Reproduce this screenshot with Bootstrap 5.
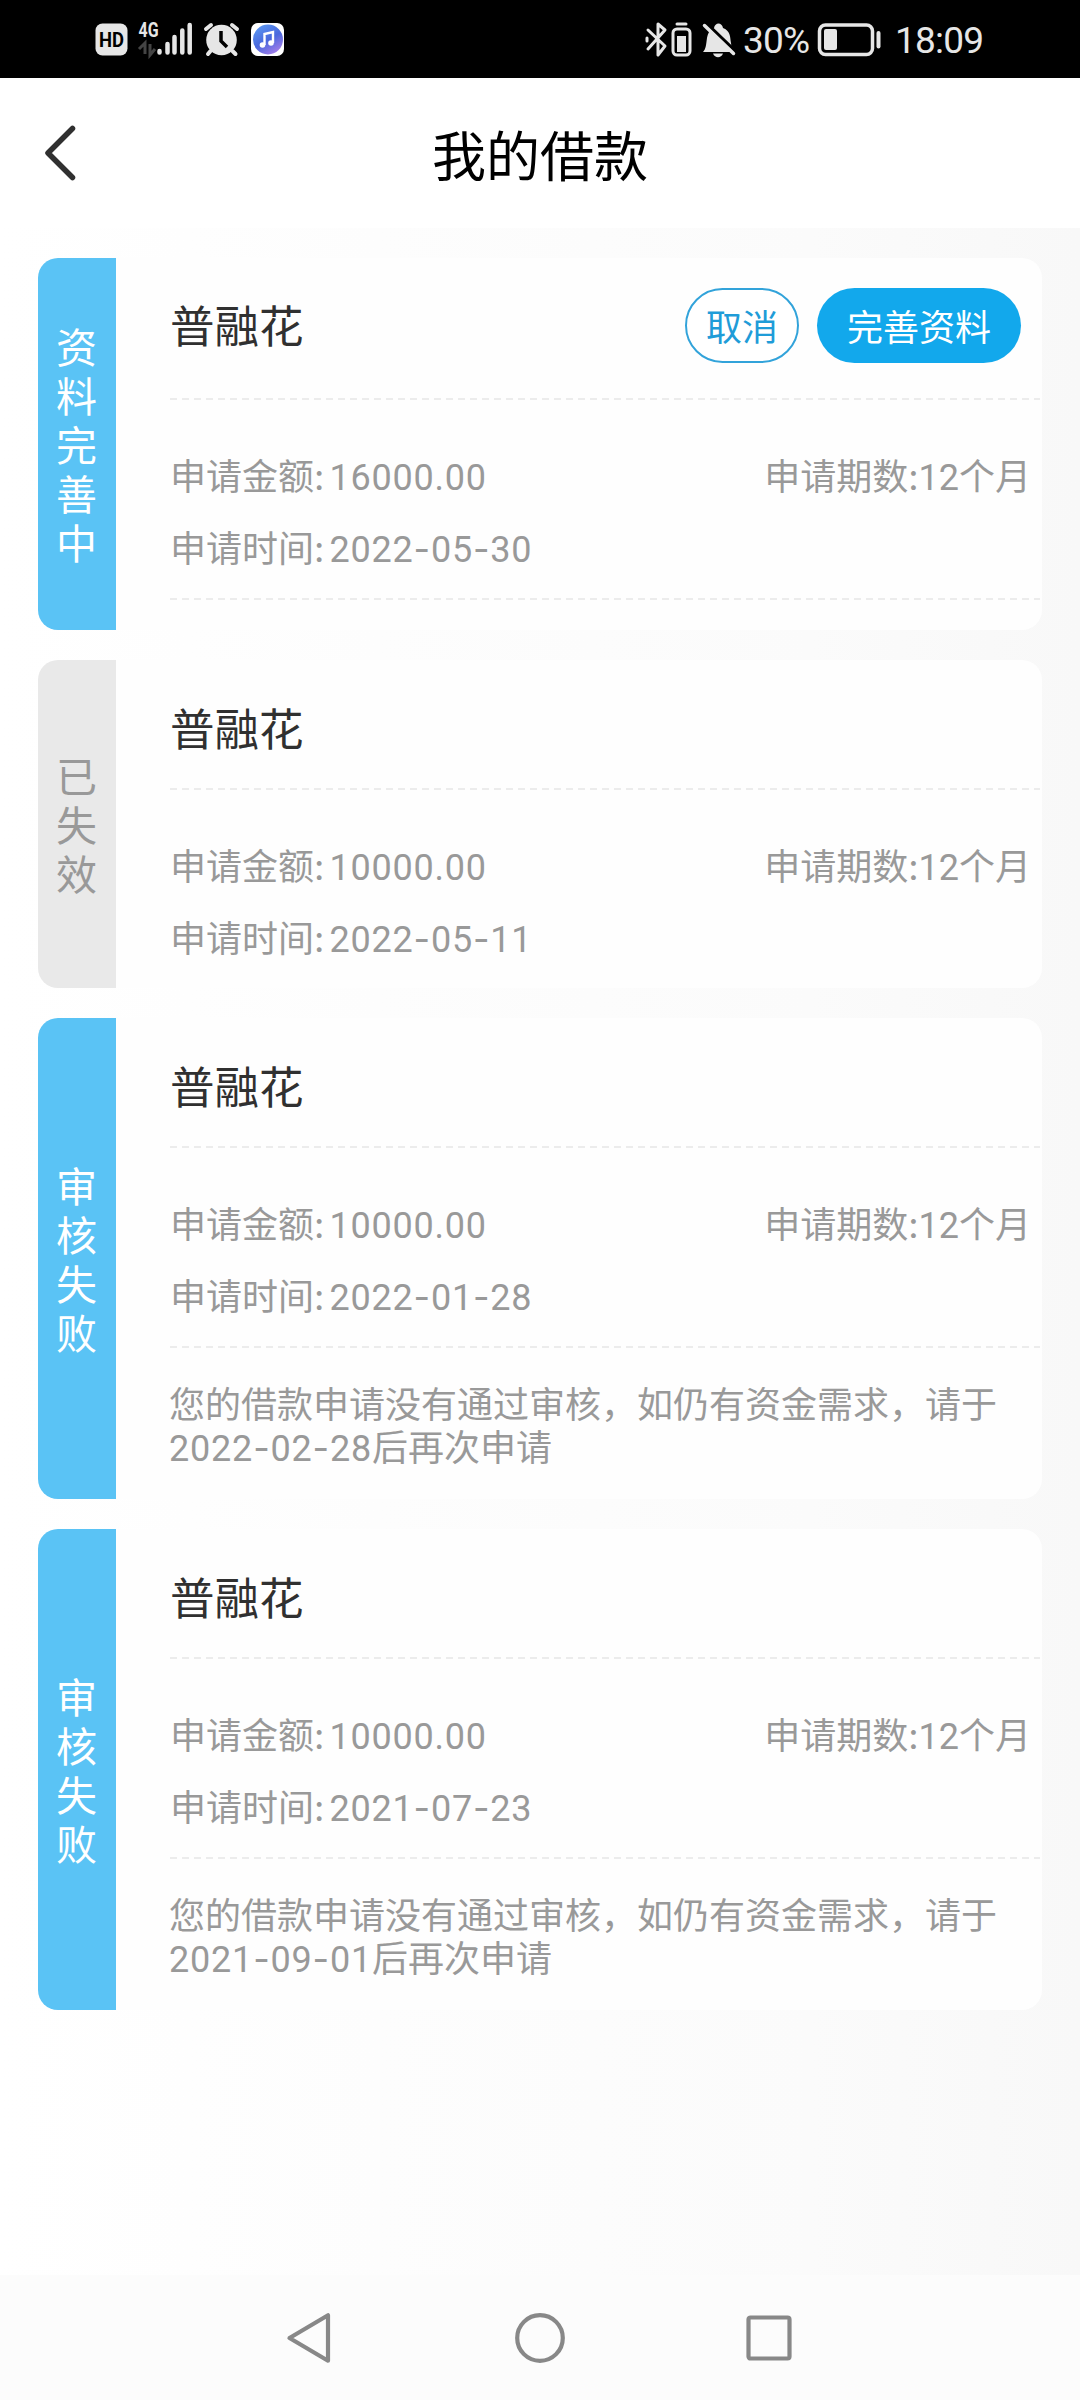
<!DOCTYPE html>
<html lang="zh-CN">
<head>
<meta charset="utf-8">
<meta name="viewport" content="width=device-width, initial-scale=1">
<title>我的借款</title>
<link href="https://cdn.jsdelivr.net/npm/bootstrap@5.3.0/dist/css/bootstrap.min.css" rel="stylesheet">
<style>
body{width:1080px;height:2400px;overflow:hidden;font-family:"Noto Sans CJK SC","Noto Sans",sans-serif;color:#303030;background:#fff}
.statusbar{height:78px;background:#000;color:#e6e6e6;font:400 37px/78px Roboto,"Noto Sans",sans-serif}
.statusbar svg{display:block;flex:none}
.st-text{padding-top:4px;letter-spacing:-.8px}
.titlebar{height:150px;background:#fff}
.titlebar h1{font-size:54px;line-height:60px;font-weight:400;color:#000;padding-top:1px}
.side{width:120px}
.content{background:linear-gradient(90deg,#fff 0,#fdfdfd 35%,#fbfbfb 75%,#f8f8f8 100%);padding:30px 38px 0;gap:30px}
.loan{border-radius:20px;background:#fefefe;overflow:hidden}
.loan-state{width:78px;background:#5ac3f5;color:#fff;font-size:41px;line-height:49px;padding-right:1px}
.loan-state span{width:41px;word-break:break-all;margin-top:-2px}
.loan-state.expired{background:#e9e9e9;color:#999}
.loan-main{padding-left:54px;padding-right:2px}
.loan-top{height:128px;padding-top:5px}
.loan.editing .loan-top{height:140px;padding:0 19px 5px 0}
.loan-name{font-size:44.5px;line-height:60px}
.editing .loan-name{margin-top:-3px}
.dash{height:2px;background:repeating-linear-gradient(90deg,#ececec 0 7px,transparent 7px 12px)}
.facts,.note{font-family:Inter,"Noto Sans CJK SC",sans-serif;color:#999;font-size:36px}
.facts{line-height:71px;height:198px;padding:42px 9px 0 0}
.facts b,.note b,.term{font-family:Roboto,"Noto Sans CJK SC",sans-serif;font-weight:400}
.facts b,.note b{letter-spacing:.8px}
.facts b i,.note b i{font-family:Inter,sans-serif;font-style:normal}
.facts b{margin-left:5px}
.note{line-height:42.5px;padding-top:36px;height:151px;margin-left:-1px}
.pill{height:75px;border-radius:38px;font-size:36px;line-height:1;padding:0 0 1px}
.pill-cancel{width:114px;border:2px solid #32a3da;color:#1f9cd8;background:#fff}
.pill-go{width:204px;border:0;color:#fff;background:#12a8ec}
.sysnav{height:125px;background:#fcfcfc;padding:0 285px}
</style>
<script src="https://cdn.jsdelivr.net/npm/bootstrap@5.3.0/dist/js/bootstrap.bundle.min.js"></script>
</head>
<body class="d-flex flex-column">
<div class="statusbar d-flex align-items-center flex-shrink-0">
  <svg width="290" height="78" viewBox="0 0 290 78" fill="#e6e6e6">
    <rect x="95.500" y="23.500" width="32" height="32" rx="7"/>
    <text x="111.500" y="47" text-anchor="middle" font-family="Roboto" font-weight="700" font-size="21" textLength="25" lengthAdjust="spacingAndGlyphs" fill="#000">HD</text>
    <text x="138.500" y="37" font-family="Roboto" font-weight="700" font-size="20" textLength="20" lengthAdjust="spacingAndGlyphs">4G</text>
    <path d="M139 49l6-6v11M150 44v11l5-6" fill="none" stroke="#444" stroke-width="3"/>
    <g stroke="#e6e6e6" stroke-width="4.500" stroke-linecap="round"><path d="M159.500 51v1.500M167.500 44v8.500M174.500 37v15.500M182.300 30.500v22M189.700 25v27.500"/></g>
    <circle cx="221.500" cy="40" r="15.300"/>
    <path d="M206 29l5-4M237 29l-5-4M210.500 51l-2.500 3M232.500 51l3 3" stroke="#e6e6e6" stroke-width="4" stroke-linecap="round"/>
    <path d="M221 31v10l6 6" fill="none" stroke="#000" stroke-width="3.500"/>
    <rect x="251" y="23" width="33" height="33" rx="7" fill="#fff"/>
    <defs><linearGradient id="mu" x1="0" y1="0" x2="0.600" y2="1"><stop offset="0" stop-color="#5ea0f5"/><stop offset=".6" stop-color="#4a68dd"/><stop offset="1" stop-color="#9b7be8"/></linearGradient></defs>
    <circle cx="268" cy="39.500" r="15" fill="url(#mu)"/>
    <path d="M264.500 45V34l8.500-2v11" fill="none" stroke="#fff" stroke-width="2.400"/>
    <circle cx="262.500" cy="45" r="2.800" fill="#fff"/><circle cx="271" cy="43" r="2.800" fill="#fff"/>
  </svg>
  <svg class="ms-auto" width="100" height="78" viewBox="640 0 100 78" fill="none" stroke="#e6e6e6" stroke-width="3" stroke-linecap="round" stroke-linejoin="round">
    <path d="M648 30l17 16-7 9V24l7 6-17 19M647 38v3"/>
    <path d="M677 24h9" stroke-width="3"/><rect x="673" y="29" width="17" height="26" rx="4"/><rect x="677" y="36" width="9" height="16" fill="#e6e6e6" stroke="none"/>
    <path d="M703 52c3-3 3-7 4-14 1-5 3-9 7-10 1-6 8-6 9 0 8 3 7 10 8 15 0 4 2 6 3 9z" fill="#e6e6e6" stroke="none"/>
    <path d="M713 53.500h10c-2 5-8 5-10 0z" fill="#e6e6e6" stroke="none"/>
    <path d="M706 23l30 29" stroke="#000" stroke-width="3.500"/>
    <path d="M704.500 25.500l29 28" stroke-width="3.500"/>
  </svg>
  <span class="st-text" style="width:72px;margin-left:3px">30%</span>
  <svg width="66" height="78" viewBox="815 0 66 78" fill="none" stroke="#e6e6e6" stroke-width="3.500">
    <rect x="819.500" y="25" width="53" height="29.500" rx="6"/><rect x="824" y="29" width="13" height="21" rx="2" fill="#e6e6e6" stroke="none"/><path d="M878.500 33v13.500" stroke-width="4" stroke-linecap="round"/>
  </svg>
  <span class="st-text" style="width:185px;margin-left:14px">18:09</span>
</div>

<header class="titlebar d-flex align-items-center justify-content-between flex-shrink-0">
  <svg class="side" width="120" height="60" viewBox="0 0 120 60" fill="none" stroke="#303030" stroke-width="5.500" stroke-linecap="round" stroke-linejoin="round"><path d="M72.500 5.500L48 30l24.500 24.500"/></svg>
  <h1 class="m-0">我的借款</h1>
  <div class="side"></div>
</header>

<main class="content d-flex flex-column flex-grow-1">
  <section class="loan editing d-flex" style="height:372px">
    <div class="loan-state d-flex align-items-center justify-content-center flex-shrink-0"><span>资料完善中</span></div>
    <div class="loan-main flex-grow-1">
      <div class="loan-top d-flex align-items-center justify-content-between">
        <div class="loan-name">普融花</div>
        <div class="d-flex" style="gap:18px">
          <button class="btn pill pill-cancel">取消</button>
          <button class="btn pill pill-go">完善资料</button>
        </div>
      </div>
      <div class="dash"></div>
      <div class="facts">
        <div class="d-flex justify-content-between"><div>申请金额:<b>16000.00</b></div><div>申请期数:<span class="term">12个月</span></div></div>
        <div>申请时间:<b>2022<i>-</i>05<i>-</i>30</b></div>
      </div>
      <div class="dash"></div>
    </div>
  </section>

  <section class="loan d-flex" style="height:328px">
    <div class="loan-state expired d-flex align-items-center justify-content-center flex-shrink-0"><span>已失效</span></div>
    <div class="loan-main flex-grow-1">
      <div class="loan-top d-flex align-items-center"><div class="loan-name">普融花</div></div>
      <div class="dash"></div>
      <div class="facts">
        <div class="d-flex justify-content-between"><div>申请金额:<b>10000.00</b></div><div>申请期数:<span class="term">12个月</span></div></div>
        <div>申请时间:<b>2022<i>-</i>05<i>-</i>11</b></div>
      </div>
    </div>
  </section>

  <section class="loan d-flex" style="height:481px">
    <div class="loan-state d-flex align-items-center justify-content-center flex-shrink-0"><span>审核失败</span></div>
    <div class="loan-main flex-grow-1">
      <div class="loan-top d-flex align-items-center"><div class="loan-name">普融花</div></div>
      <div class="dash"></div>
      <div class="facts">
        <div class="d-flex justify-content-between"><div>申请金额:<b>10000.00</b></div><div>申请期数:<span class="term">12个月</span></div></div>
        <div>申请时间:<b>2022<i>-</i>01<i>-</i>28</b></div>
      </div>
      <div class="dash"></div>
      <div class="note">您的借款申请没有通过审核，如仍有资金需求，请于<br><b>2022<i>-</i>02<i>-</i>28</b>后再次申请</div>
    </div>
  </section>

  <section class="loan d-flex" style="height:481px">
    <div class="loan-state d-flex align-items-center justify-content-center flex-shrink-0"><span>审核失败</span></div>
    <div class="loan-main flex-grow-1">
      <div class="loan-top d-flex align-items-center"><div class="loan-name">普融花</div></div>
      <div class="dash"></div>
      <div class="facts">
        <div class="d-flex justify-content-between"><div>申请金额:<b>10000.00</b></div><div>申请期数:<span class="term">12个月</span></div></div>
        <div>申请时间:<b>2021<i>-</i>07<i>-</i>23</b></div>
      </div>
      <div class="dash"></div>
      <div class="note">您的借款申请没有通过审核，如仍有资金需求，请于<br><b>2021<i>-</i>09<i>-</i>01</b>后再次申请</div>
    </div>
  </section>
</main>

<nav class="sysnav d-flex align-items-center justify-content-between flex-shrink-0">
  <svg width="50" height="56" viewBox="0 0 50 56" fill="none" stroke="#888" stroke-width="4.200" stroke-linejoin="round"><path d="M43 5.300v45.400L4.500 28z"/></svg>
  <svg width="56" height="56" viewBox="0 0 56 56" fill="none" stroke="#888" stroke-width="4.200"><circle cx="28" cy="28" r="22.800"/></svg>
  <svg width="50" height="56" viewBox="0 0 50 56" fill="none" stroke="#888" stroke-width="4.200"><rect x="3.500" y="7.500" width="41" height="41" rx="2"/></svg>
</nav>
</body>
</html>
